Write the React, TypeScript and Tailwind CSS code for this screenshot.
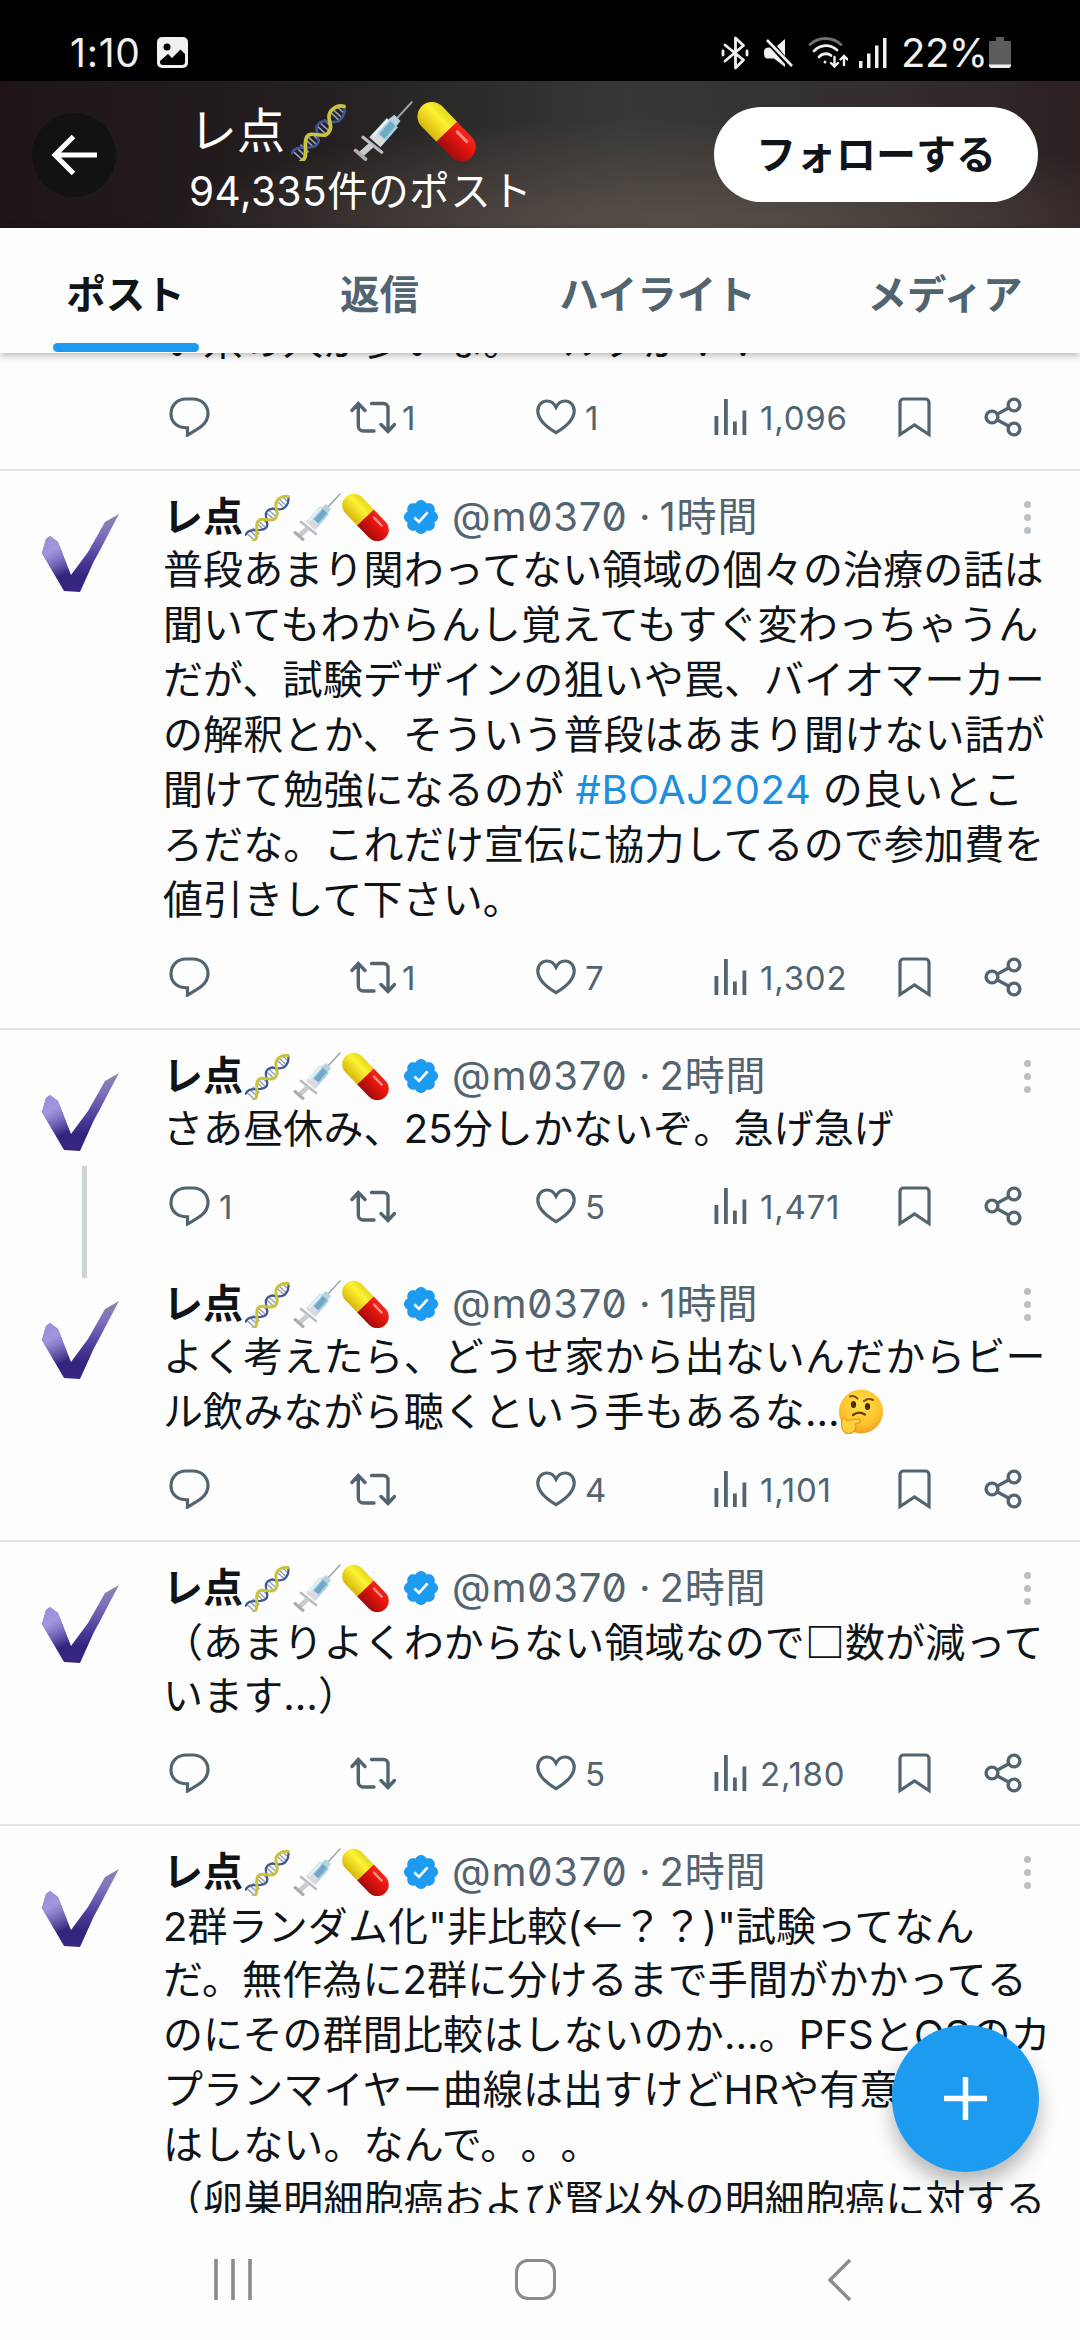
import React from "react";

interface Post {
  id: number;
  time: string;
  lines: React.ReactNode[];
  replies?: string;
  reposts?: string;
  likes?: string;
  views: string;
  thread?: boolean;
}

const tabs = [
  { label: "ポスト", cell: "w-[251px]", active: true },
  { label: "返信", cell: "w-[257px]", active: false },
  { label: "ハイライト", cell: "w-[299px]", active: false },
  { label: "メディア", cell: "w-[276px]", active: false },
];

const posts: Post[] = [
  {
    id: 1,
    time: "1時間",
    lines: [
      "普段あまり関わってない領域の個々の治療の話は",
      "聞いてもわからんし覚えてもすぐ変わっちゃうん",
      "だが、試験デザインの狙いや罠、バイオマーカー",
      "の解釈とか、そういう普段はあまり聞けない話が",
      <>
        聞けて勉強になるのが <span className="tracking-[0.6px] text-[#1d8fe0]">#BOAJ2024</span> の良いとこ
      </>,
      "ろだな。これだけ宣伝に協力してるので参加費を",
      "値引きして下さい。",
    ],
    reposts: "1",
    likes: "7",
    views: "1,302",
  },
  {
    id: 2,
    time: "2時間",
    lines: ["さあ昼休み、25分しかないぞ。急げ急げ"],
    replies: "1",
    likes: "5",
    views: "1,471",
    thread: true,
  },
  {
    id: 3,
    time: "1時間",
    lines: [
      "よく考えたら、どうせ家から出ないんだからビー",
      <>
        ル飲みながら聴くという手もあるな…
        <Thinking />
      </>,
    ],
    likes: "4",
    views: "1,101",
  },
  {
    id: 4,
    time: "2時間",
    lines: [
      <>
        （あまりよくわからない領域なので<span className="font-['Noto_Sans_CJK_JP'] font-bold">□</span>数が減って
      </>,
      "います…）",
    ],
    likes: "5",
    views: "2,180",
  },
  {
    id: 5,
    time: "2時間",
    lines: [
      <>
        2群ランダム化"非比較(<span className="font-['Noto_Sans_CJK_JP']">←</span>？？)"試験ってなん
      </>,
      "だ。無作為に2群に分けるまで手間がかかってる",
      "のにその群間比較はしないのか…。PFSとOSのカ",
      "プランマイヤー曲線は出すけどHRや有意差検定",
      "はしない。なんで。。。",
      "（卵巣明細胞癌および腎以外の明細胞癌に対する",
    ],
    views: "3,024",
  },
];

function Dna({ className }: { className: string }) {
  return (
    <svg viewBox="0 0 48 48" className={className} role="img" aria-label="🧬">
      <g transform="rotate(-47 24 24)" fill="none" strokeLinecap="round">
        <path d="M-3 20v8M1 19v10M5 20v8M11 20v8M14 19v10M18 20v8M25.500 20v8M29 19v10M33 20v8M41 20v8M44 19v10M48 20v8" stroke="#8f9fba" strokeWidth="1.4" />
        <path d="M-5 19C0 17 3 21 6 24S12 30 15.500 29 22 20 25 19 32 19 35 24 41 30 45 29 50 27 52 24" stroke="#3f5590" strokeWidth="2.200" />
        <path d="M-5 29C0 31 3 27 6 24S12 18 15.500 19 22 28 25 29 32 29 35 24 41 18 45 19 50 21 52 24" stroke="#c9c43c" strokeWidth="3" />
      </g>
    </svg>
  );
}

function Syringe({ className }: { className: string }) {
  return (
    <svg viewBox="0 0 48 48" className={className} role="img" aria-label="💉">
      <path d="M35 14 47 1" stroke="#9aa3a8" strokeWidth="1.500" strokeLinecap="round" />
      <path d="m33 11 5 5-4 5-6-6z" fill="#b5d3df" />
      <path d="M27 13.500 36 21 23 36l-9-8z" fill="#a9cfe0" />
      <path d="M30 16 34 20 22 34l-4-4z" fill="#6fa9c6" />
      <path d="m18 24 8 7-4 6-9-8z" fill="#d9dadd" />
      <path d="M28 15 16 28" stroke="#e6f4fa" strokeWidth="2" />
      <path d="m8 29 15 12" stroke="#b9bcc0" strokeWidth="2.600" strokeLinecap="round" />
      <path d="M15 35 6 43" stroke="#c9cbcf" strokeWidth="5" />
      <path d="m2 39.500 8 7" stroke="#a9acb1" strokeWidth="3" strokeLinecap="round" />
    </svg>
  );
}

function Pill({ className }: { className: string }) {
  return (
    <svg viewBox="0 0 48 48" className={className} role="img" aria-label="💊">
      <defs>
        <linearGradient id="pillYellow" x1="0" y1="0" x2="0" y2="1">
          <stop offset="0" stopColor="#e6d81c" />
          <stop offset="0.350" stopColor="#fdf235" />
          <stop offset="1" stopColor="#d8b60c" />
        </linearGradient>
        <linearGradient id="pillRed" x1="0" y1="0" x2="0" y2="1">
          <stop offset="0" stopColor="#ee2a1c" />
          <stop offset="0.350" stopColor="#e8150f" />
          <stop offset="1" stopColor="#a30c0a" />
        </linearGradient>
      </defs>
      <g transform="translate(24.500 24.500) rotate(46)">
        <path d="M1-11.500H-17a11.500 11.500 0 0 0 0 23H1z" fill="url(#pillYellow)" />
        <path d="M0-11.500H17a11.500 11.500 0 0 1 0 23H0z" fill="url(#pillRed)" />
        <path d="M6-6H17" stroke="#f58a80" strokeWidth="2.500" strokeLinecap="round" />
      </g>
    </svg>
  );
}

function Thinking() {
  return (
    <svg viewBox="0 0 46 46" className="-ml-[2px] inline-block size-[46px] align-[-9px]" role="img" aria-label="🤔">
      <defs>
        <radialGradient id="face" cx="0.500" cy="0.350" r="0.650">
          <stop offset="0" stopColor="#ffe04a" />
          <stop offset="0.700" stopColor="#fcc22d" />
          <stop offset="1" stopColor="#ee9f24" />
        </radialGradient>
      </defs>
      <circle cx="23" cy="22.500" r="22" fill="url(#face)" />
      <ellipse cx="15.500" cy="15.500" rx="2.600" ry="3.500" fill="#4a2a0c" />
      <ellipse cx="29.500" cy="17.500" rx="2.600" ry="3.500" fill="#4a2a0c" />
      <path d="M12 7.500c3-1.500 5-.5 7.500 2M26 12c3-2.500 6-2.500 9-1" fill="none" stroke="#7a4a12" strokeWidth="2" strokeLinecap="round" />
      <path d="M15 26c4-3 8-3 12-.5" fill="none" stroke="#6b3b0d" strokeWidth="2.200" strokeLinecap="round" />
      <path d="M4 30c2-1.500 4-.5 4.500 1.500l11-1.500c3.500-.4 3.800 3.200 1 4l-3.500 1c2.500 3-1 9.500-6 9.500C5 44.500 2.500 39 4 30z" fill="#fdd13a" stroke="#e79a22" strokeWidth="1.200" />
    </svg>
  );
}

function Verified() {
  return (
    <svg viewBox="0 0 22 22" className="ml-[12px] size-[40px] shrink-0" fill="#1d9bf0">
      <path d="M20.396 11c-.018-.646-.215-1.275-.57-1.816-.354-.54-.852-.972-1.438-1.246.223-.607.270-1.264.140-1.897-.131-.634-.437-1.218-.882-1.687-.470-.445-1.053-.750-1.687-.882-.633-.130-1.290-.083-1.897.140-.273-.587-.704-1.086-1.245-1.440S11.647 1.620 11 1.604c-.646.017-1.273.213-1.813.568s-.969.854-1.240 1.440c-.608-.223-1.267-.272-1.902-.140-.635.130-1.220.436-1.690.882-.445.470-.749 1.055-.878 1.688-.130.633-.080 1.290.144 1.896-.587.274-1.087.705-1.443 1.245-.356.540-.555 1.170-.574 1.817.020.647.218 1.276.574 1.817.356.540.856.972 1.443 1.245-.224.606-.274 1.263-.144 1.896.130.634.433 1.218.877 1.688.470.443 1.054.747 1.687.878.633.132 1.290.084 1.897-.136.274.586.705 1.084 1.246 1.439.540.354 1.170.551 1.816.569.647-.016 1.276-.213 1.817-.567s.972-.854 1.245-1.440c.604.239 1.266.296 1.903.164.636-.132 1.220-.447 1.680-.907.460-.460.776-1.044.908-1.681s.075-1.299-.165-1.903c.586-.274 1.084-.705 1.439-1.246.354-.540.551-1.170.569-1.816z" />
      <path d="m7.400 11.300 2.500 2.400 4.700-5.200" fill="none" stroke="#fff" strokeWidth="1.500" />
    </svg>
  );
}

function Avatar() {
  return (
    <svg viewBox="0 0 78 80" className="h-[80px] w-[78px]">
      <defs>
        <linearGradient id="check" x1="0" y1="0" x2="0" y2="1">
          <stop offset="0" stopColor="#8f87a8" />
          <stop offset="0.250" stopColor="#7f6fc0" />
          <stop offset="0.600" stopColor="#4b3a96" />
          <stop offset="0.800" stopColor="#33247b" />
          <stop offset="1" stopColor="#3a2484" />
        </linearGradient>
        <linearGradient id="checkLeft" x1="0" y1="0" x2="0.400" y2="1">
          <stop offset="0" stopColor="#9c8fd6" />
          <stop offset="0.400" stopColor="#a394dd" />
          <stop offset="1" stopColor="#a394dd" stopOpacity="0" />
        </linearGradient>
      </defs>
      <path d="M77 1 63 9 46 39 29 62 16 29 8 23 4 26 0 40 8 54 22 78 38 79 52 48 57 39 69 16z" fill="url(#check)" />
      <path d="M16 29 8 23 4 26 0 40 8 54 17 68 29 62z" fill="url(#checkLeft)" />
    </svg>
  );
}

function Count({ children }: { children?: string }) {
  return <span className="pt-px text-[33px] leading-[44px] tracking-[0.8px]">{children}</span>;
}

function Actions({ replies, reposts, likes, views }: Pick<Post, "replies" | "reposts" | "likes" | "views">) {
  return (
    <div className="flex h-[44px] items-center pl-[6px] text-[#536471]">
      <div className="flex w-[181px] items-center gap-[9px]">
        <svg viewBox="0 0 41 40" className="h-[40px] w-[41px]" fill="none" stroke="currentColor" strokeWidth="3.200">
          <path d="M18.500 30.800H18C8 30.800 2 24.800 2 17 2 8.200 8.500 2 17 2h7c8.500 0 15 6.200 15 14.500 0 10-8 14.500-20.500 21.500z" />
        </svg>
        <Count>{replies}</Count>
      </div>
      <div className="flex w-[186px] items-center gap-[6px]">
        <svg viewBox="0 0 46 33" className="h-[33px] w-[46px]" fill="none" stroke="currentColor" strokeWidth="3.400" strokeLinecap="round">
          <path d="M2 9.500 8.300 2.500 15 9.500M8.300 3.500V25a5 5 0 0 0 5 5H24M21.500 2.500H33.500a4.500 4.500 0 0 1 4.500 4.500V29.500M31 23.500 38 30.500 44.500 23.500" />
        </svg>
        <Count>{reposts}</Count>
      </div>
      <div className="flex w-[178px] items-center gap-[9px]">
        <svg viewBox="0 0 40 36" className="h-[36px] w-[40px]" fill="none" stroke="currentColor" strokeWidth="3.200">
          <path d="M20 33.700C8 26.500 1.800 19 1.800 12 1.800 6 6 2 11 2c4 0 7 2.200 9 6.200C22 4.200 25 2 29 2c5 0 9.200 4 9.200 10 0 7-6.200 14.500-18.200 21.700z" />
        </svg>
        <Count>{likes}</Count>
      </div>
      <div className="flex w-[184px] items-center gap-[13px]">
        <svg viewBox="0 0 33 36" className="h-[36px] w-[33px]" fill="currentColor">
          <path d="M.5 17H4.300V36H.5zM10 0h3.800v36H10zM19 22.500h3.800V36H19zM28.500 11.500h3.800V36H28.500z" />
        </svg>
        <Count>{views}</Count>
      </div>
      <svg viewBox="0 0 33 41" className="mr-[53px] h-[41px] w-[33px]" fill="none" stroke="currentColor" strokeWidth="3.200">
        <path d="M2 37.500V5.500A3.500 3.500 0 0 1 5.500 2h22A3.500 3.500 0 0 1 31 5.500V37.500L16.500 28z" />
      </svg>
      <svg viewBox="0 0 38 40" className="h-[40px] w-[38px]" fill="none" stroke="currentColor" strokeWidth="3.400">
        <circle cx="8" cy="20" r="5.900" />
        <circle cx="30" cy="8" r="5.900" />
        <circle cx="30" cy="32" r="5.900" />
        <path d="M13 17.200 25 10.800M13 22.800 25 29.200" />
      </svg>
    </div>
  );
}

function PostItem({ post }: { post: Post }) {
  return (
    <article className={`flex shrink-0 ${post.thread ? "" : "border-b-2 border-[#e1e5e8]"}`}>
      <div className="flex w-[163px] shrink-0 flex-col pl-[42px] pt-[42px]">
        <Avatar />
        {post.thread && <div className="-mb-[40px] ml-[40px] mt-[14px] h-[112px] w-[5px] shrink-0 bg-[#cfd4d8]" />}
      </div>
      <div className={`flex w-[917px] flex-col pt-[21px] ${post.thread ? "pb-[30px]" : "pb-[29px]"}`}>
        <div className="flex h-[50px] items-center">
          <span className="text-[40px] font-bold leading-[50px]">レ点</span>
          <Dna className="ml-[2px] size-[48px]" />
          <Syringe className="size-[48px]" />
          <Pill className="size-[48px]" />
          <Verified />
          <span className="ml-[11px] w-[176px] whitespace-nowrap text-[40px] leading-[50px] tracking-[0.8px] text-[#536471] [font-feature-settings:'zero']">
            @m0370
          </span>
          <span className="ml-[11px] text-[40px] leading-[50px] text-[#536471]">·</span>
          <span className="ml-[9px] text-[40px] leading-[50px] tracking-[0.8px] text-[#536471]">{post.time}</span>
          <div className="ml-auto mr-[49px] flex flex-col gap-[6px]">
            <span className="size-[7px] rounded-full bg-[#b9c0c5]" />
            <span className="size-[7px] rounded-full bg-[#b9c0c5]" />
            <span className="size-[7px] rounded-full bg-[#b9c0c5]" />
          </div>
        </div>
        {post.lines.map((line, i) => (
          <p key={i} className="h-[55px] whitespace-nowrap text-[40px] leading-[55px] tracking-[0.12px]">
            {line}
          </p>
        ))}
        <div className="h-[28px]" />
        <Actions {...post} />
      </div>
    </article>
  );
}

function StatusBar() {
  return (
    <div className="flex h-[81px] shrink-0 items-center bg-black pl-[70px] pt-[24px] text-[#f0f0f0]">
      <span className="w-[87px] text-[39px] leading-[57px] tracking-[0.8px]">1:10</span>
      <svg viewBox="0 0 31 31" className="size-[31px]">
        <rect width="31" height="31" rx="5" fill="#f0f0f0" />
        <circle cx="10" cy="10" r="3.500" fill="#000" />
        <path d="M3 24 11 17l4 4 8.500-8.500L28 17v8a3 3 0 0 1-3 3H6a3 3 0 0 1-3-3z" fill="#000" />
      </svg>
      <svg viewBox="0 0 28 34" className="ml-[533px] h-[34px] w-[28px]" fill="none" stroke="currentColor" strokeWidth="2.800" strokeLinejoin="round" strokeLinecap="round">
        <path d="M4 9 22.500 24 14.500 32V2l8 7.500L4 25" />
        <path d="M2 15v4M26 15v4" />
      </svg>
      <svg viewBox="0 0 30 30" className="ml-[15px] size-[30px]" fill="currentColor">
        <path d="M21 1v17L13 8zM0 14c0-4 3-4.500 6-4.500L21 26v3L10 20.500H4C1 20.500 0 19 0 14z" />
        <path d="m3 2 25 26" stroke="currentColor" strokeWidth="2.600" />
      </svg>
      <svg viewBox="0 0 40 31" className="ml-[14px] h-[31px] w-[40px]" fill="none" stroke="currentColor" strokeWidth="2.800" strokeLinecap="round">
        <path d="M2 7.500C11-.5 24-.5 33 7.500" stroke="#6f6f6f" />
        <path d="M6 14C13 7 22 7 29 13M11 20C14 16 20 16 23 18.500" />
        <circle cx="17" cy="25" r="1.500" fill="currentColor" stroke="none" />
        <path d="M26.500 20v9M23 26l3.500 3.500L30 26M36 28v-9M32.500 22.500 36 19l3.500 3.500" strokeWidth="2.400" />
      </svg>
      <svg viewBox="0 0 28 30" className="ml-[11px] h-[30px] w-[28px]" fill="currentColor">
        <path d="M0 23h3.500v7H0zM8 15.500h3.500V30H8zM16 7.500h3.500V30H16zM24 0h3.500v30H24z" />
      </svg>
      <span className="ml-[14px] w-[88px] text-[40px] leading-[57px] tracking-[-0.5px]">22%</span>
      <svg viewBox="0 0 22 31" className="h-[31px] w-[22px]">
        <path d="M7 0h8v4h6a1 1 0 0 1 1 1v23a3 3 0 0 1-3 3H3a3 3 0 0 1-3-3V5a1 1 0 0 1 1-1h6z" fill="#5c5c5c" />
        <path d="M0 27.500h22a3 3 0 0 1-3 3.500H3a3 3 0 0 1-3-3.500z" fill="#f0f0f0" />
      </svg>
    </div>
  );
}

export default function App() {
  return (
    <div
      lang="ja"
      className="relative flex h-[2340px] w-[1080px] flex-col overflow-hidden bg-[#fdfdfd] font-['Inter','Noto_Sans_CJK_JP',sans-serif] text-[#0f1419] [text-spacing-trim:space-all]"
    >
      <StatusBar />

      <header className="flex h-[147px] shrink-0 items-center bg-[radial-gradient(ellipse_520px_120px_at_680px_155px,#5c514b,transparent),linear-gradient(to_right,#1f1518,#241f20_30%,#373836_58%,#332c2b_85%,#2c2021)] pl-[32px] text-white">
        <div className="flex size-[84px] items-center justify-center rounded-full bg-[#121212]">
          <svg viewBox="0 0 48 42" className="h-[42px] w-[48px]" fill="none" stroke="#fff" strokeWidth="5">
            <path d="M47 21H5M23.500 2.500 5 21l18.500 18.500" />
          </svg>
        </div>
        <div className="flex w-[598px] flex-col pl-[73px] pt-[13px]">
          <div className="flex h-[62px] items-center">
            <span className="text-[48px] leading-[62px]">レ点</span>
            <Dna className="ml-[6px] size-[59px]" />
            <Syringe className="ml-[3px] size-[60px]" />
            <Pill className="ml-[3px] size-[60px]" />
          </div>
          <span className="whitespace-nowrap text-[40.500px] leading-[60px] tracking-[0.5px]">94,335件のポスト</span>
        </div>
        <button className="h-[95px] w-[324px] rounded-full bg-white text-[40px] font-bold text-[#0f1419]">フォローする</button>
      </header>

      <nav className="z-10 flex h-[125px] shrink-0 overflow-x-clip bg-[#fdfdfd] shadow-[0_2px_8px_rgba(0,0,0,0.3)]">
        {tabs.map((tab) => (
          <div key={tab.label} className={`flex shrink-0 flex-col items-center ${tab.cell}`}>
            <span
              className={`h-[115px] pt-[9px] text-[39.500px] font-bold leading-[117px] ${tab.active ? "text-[#0f1419]" : "text-[#536471]"}`}
            >
              {tab.label}
            </span>
            {tab.active && <div className="h-[9px] w-[146px] rounded-full bg-[#1d9bf0]" />}
          </div>
        ))}
      </nav>

      <main className="flex h-[1860px] shrink-0 flex-col overflow-hidden">
        <article className="-mt-[40px] shrink-0 border-b-2 border-[#e1e5e8] pb-[30px] pl-[163px]">
          <p className="h-[55px] whitespace-nowrap text-[40px] leading-[55px]">い系の人が多いな。ールクが！！</p>
          <div className="h-[27px]" />
          <Actions reposts="1" likes="1" views="1,096" />
        </article>
        {posts.map((post) => (
          <PostItem key={post.id} post={post} />
        ))}
      </main>

      <footer className="flex h-[127px] shrink-0 items-center pt-[6px] pl-[214px] text-[#8b8b8b]">
        <svg viewBox="0 0 38 41" className="h-[41px] w-[38px]" stroke="currentColor" strokeWidth="3.600">
          <path d="M2 0v41M19 0v41M36 0v41" />
        </svg>
        <div className="ml-[263px] size-[41px] rounded-[13px] border-[3.5px] border-[#8b8b8b]" />
        <svg viewBox="0 0 24 42" className="ml-[271px] h-[42px] w-[24px]" fill="none" stroke="currentColor" strokeWidth="3.400">
          <path d="M23 1 3 21l20 20" />
        </svg>
      </footer>

      {/* Compose button floats over the timeline */}
      <button className="absolute left-[892px] top-[2025px] z-20 flex size-[147px] items-center justify-center rounded-full bg-[#1d9bf0] shadow-[0_12px_20px_rgba(0,0,0,0.28)]">
        <svg viewBox="0 0 43 43" className="size-[43px]" stroke="#fff" strokeWidth="5.500">
          <path d="M21.500 0v43M0 21.500h43" />
        </svg>
      </button>
    </div>
  );
}
